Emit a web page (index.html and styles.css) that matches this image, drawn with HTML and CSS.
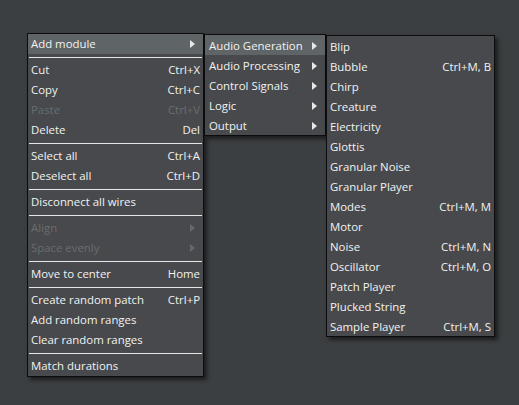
FILE: index.html
```html
<!DOCTYPE html>
<html>
<head>
<meta charset="utf-8">
<link rel="stylesheet" href="styles.css">
</head>
<body>
<div class="menu main">
  <div class="item active"><span>Add module</span><i class="arrow"></i></div>
  <div class="sep"></div>
  <div class="item"><span>Cut</span><span>Ctrl+X</span></div>
  <div class="item"><span>Copy</span><span>Ctrl+C</span></div>
  <div class="item disabled"><span>Paste</span><span>Ctrl+V</span></div>
  <div class="item"><span>Delete</span><span>Del</span></div>
  <div class="sep"></div>
  <div class="item"><span>Select all</span><span>Ctrl+A</span></div>
  <div class="item"><span>Deselect all</span><span>Ctrl+D</span></div>
  <div class="sep"></div>
  <div class="item"><span>Disconnect all wires</span></div>
  <div class="sep"></div>
  <div class="item disabled"><span>Align</span><i class="arrow"></i></div>
  <div class="item disabled"><span>Space evenly</span><i class="arrow"></i></div>
  <div class="sep"></div>
  <div class="item"><span>Move to center</span><span>Home</span></div>
  <div class="sep"></div>
  <div class="item"><span>Create random patch</span><span>Ctrl+P</span></div>
  <div class="item"><span>Add random ranges</span></div>
  <div class="item"><span>Clear random ranges</span></div>
  <div class="sep"></div>
  <div class="item"><span>Match durations</span></div>
</div>
<div class="menu sub1">
  <div class="item active"><span>Audio Generation</span><i class="arrow"></i></div>
  <div class="item"><span>Audio Processing</span><i class="arrow"></i></div>
  <div class="item"><span>Control Signals</span><i class="arrow"></i></div>
  <div class="item"><span>Logic</span><i class="arrow"></i></div>
  <div class="item"><span>Output</span><i class="arrow"></i></div>
</div>
<div class="menu sub2">
  <div class="item"><span>Blip</span></div>
  <div class="item"><span>Bubble</span><span>Ctrl+M, B</span></div>
  <div class="item"><span>Chirp</span></div>
  <div class="item"><span>Creature</span></div>
  <div class="item"><span>Electricity</span></div>
  <div class="item"><span>Glottis</span></div>
  <div class="item"><span>Granular Noise</span></div>
  <div class="item"><span>Granular Player</span></div>
  <div class="item"><span>Modes</span><span>Ctrl+M, M</span></div>
  <div class="item"><span>Motor</span></div>
  <div class="item"><span>Noise</span><span>Ctrl+M, N</span></div>
  <div class="item"><span>Oscillator</span><span>Ctrl+M, O</span></div>
  <div class="item"><span>Patch Player</span></div>
  <div class="item"><span>Plucked String</span></div>
  <div class="item"><span>Sample Player</span><span>Ctrl+M, S</span></div>
</div>
</body>
</html>
```
FILE: styles.css
```css
html, body {
  margin: 0;
  padding: 0;
  width: 519px;
  height: 405px;
  background: #3c3f41;
  overflow: hidden;
  font-family: "Open Sans", "Noto Sans", sans-serif;
  font-size: 11.4px;
  color: #f2f2f2;
}
.menu {
  position: absolute;
  background: #47494c;
  border: 1px solid #0c0c0c;
  box-shadow: 3px 3px 4px rgba(0, 0, 0, 0.55);
  display: flex;
  flex-direction: column;
}
.main { left: 27px; top: 33px; width: 175px; }
.sub1 { left: 204px; top: 34px; width: 120px; }
.sub2 { left: 326px; top: 35px; width: 167px; }
.item {
  box-sizing: border-box;
  height: 20px;
  line-height: 18px;
  display: flex;
  justify-content: space-between;
  align-items: flex-start;
  padding: 1px 3px 0 3px;
  white-space: nowrap;
}
.sub1 .item { padding-top: 2px; padding-left: 4px; }
.sub2 .item { padding-top: 2px; }
.item.active { background: #5f6466; }
.item.disabled { color: #6a6d70; }
.sep {
  height: 1px;
  background: #e6e6e6;
  margin: 3px 1px 2px 1px;
}
.arrow {
  display: block;
  align-self: center;
  width: 0;
  height: 0;
  margin-top: -1px;
  border-top: 4px solid transparent;
  border-bottom: 4px solid transparent;
  border-left: 5px solid #e8e8e8;
  margin-right: 5px;
}
.item.disabled .arrow { border-left-color: #66696c; }
```
